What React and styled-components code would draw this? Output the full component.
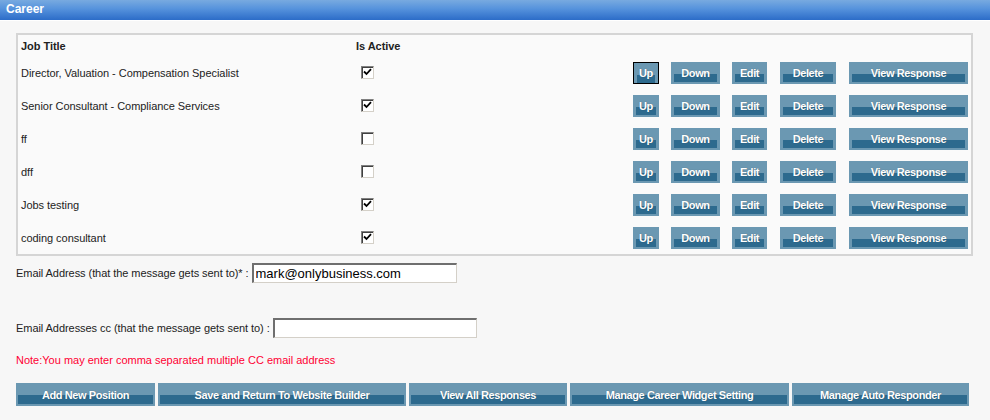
import React from "react";
import styled, { createGlobalStyle } from "styled-components";

const GlobalStyle = createGlobalStyle`
  html, body {
    margin: 0;
    padding: 0;
    background: #f7f7f7;
    font-family: "Liberation Sans", Arial, sans-serif;
  }
`

const Page = styled.div`
  width: 990px;
  height: 420px;
  background: #f7f7f7;
  overflow: hidden;
`

const TitleBar = styled.div`
  height: 20px;
  padding-left: 6px;
  background: linear-gradient(#78aae0, #5592dc 45%, #2c6cc8);
  color: #fff;
  font-weight: bold;
  font-size: 12px;
  line-height: 19px;
  border-bottom: 1px solid #fff;
`

const Body = styled.div`
  padding: 12px 17px 0 16px;
`

const ListBox = styled.div`
  border: 2px solid #d5d5d5;
  background: #fafafa;
`

const Row = styled.div`
  display: grid;
  grid-template-columns: 335px 1fr auto;
  align-items: center;
  height: ${p => p.$head ? "21px" : "33px"};
  padding: 0 3px;
  font-size: 11px;
  color: #222;
  font-weight: ${p => p.$head ? "bold" : "normal"};
  letter-spacing: -0.05px;
`

const TitleCell = styled.div`
  white-space: nowrap;
`

const CheckCell = styled.div`
  padding-left: 5px;
  display: flex;
`

const CheckBox = styled.span`
  width: 11px;
  height: 11px;
  background: #fff;
  border-top: 1px solid #808080;
  border-left: 1px solid #808080;
  border-right: 1px solid #d4d0c8;
  border-bottom: 1px solid #d4d0c8;
  box-shadow: inset 1px 1px 0 #404040;
  display: flex;
  align-items: center;
  justify-content: center;
  margin-top: -1px;
`

const Actions = styled.div`
  display: flex;
  gap: 12px;
`

const Btn = styled.button`
  box-sizing: border-box;
  width: ${p => p.$w}px;
  height: ${p => p.$h || 22}px;
  padding: 0;
  border: ${p => p.$focus ? "1px solid #000" : "none"};
  background-color: #6b98b2;
  background-image: linear-gradient(#2d6a8e, #2d6a8e);
  background-size: calc(100% - ${p => p.$inset * 2}px) ${p => p.$band}px;
  background-position: ${p => p.$inset}px ${p => p.$top}px;
  background-repeat: no-repeat;
  color: #fff;
  font-family: "Liberation Sans", Arial, sans-serif;
  font-weight: bold;
  font-size: 11px;
  letter-spacing: -0.4px;
  text-shadow: 0 0 1px rgba(0, 0, 0, 0.35);
  cursor: pointer;
  white-space: nowrap;
`

const FieldRow = styled.div`
  display: flex;
  align-items: center;
  margin-top: ${p => p.$mt}px;
  font-size: 11px;
  color: #222;
  letter-spacing: -0.06px;
`

const Input = styled.input`
  box-sizing: border-box;
  width: ${p => p.$w}px;
  height: 20px;
  margin-left: 3px;
  padding: 0 2px;
  border-top: 2px solid #6f6f6f;
  border-left: 2px solid #6f6f6f;
  border-right: 1px solid #d4d0c8;
  border-bottom: 1px solid #d4d0c8;
  background: #fff;
  font-family: "Liberation Sans", Arial, sans-serif;
  font-size: 13px;
  letter-spacing: 0;
  color: #000;
  outline: none;
`

const Note = styled.div`
  margin-top: 16px;
  font-size: 11px;
  color: #ff0033;
`

const Footer = styled.div`
  display: flex;
  gap: 3px;
  margin-top: 17px;
`

const Check = () => (
  <svg width="9" height="8" viewBox="0 0 9 8">
    <path d="M1 3.5 L3.5 6 L8 1.2" stroke="#000" strokeWidth="1.8" fill="none" />
  </svg>
)

const jobs = [
  { title: "Director, Valuation - Compensation Specialist", active: true },
  { title: "Senior Consultant - Compliance Services", active: true },
  { title: "ff", active: false },
  { title: "dff", active: false },
  { title: "Jobs testing", active: true },
  { title: "coding consultant", active: true },
]

const rowButtons = [
  { label: "Up", w: 26 },
  { label: "Down", w: 49 },
  { label: "Edit", w: 35 },
  { label: "Delete", w: 56 },
  { label: "View Response", w: 119 },
]

const footerButtons = [
  { label: "Add New Position", w: 139 },
  { label: "Save and Return To Website Builder", w: 248 },
  { label: "View All Responses", w: 158 },
  { label: "Manage Career Widget Setting", w: 219 },
  { label: "Manage Auto Responder", w: 177 },
]

export default function App() {
  return (
    <Page>
      <GlobalStyle />
      <TitleBar>Career</TitleBar>
      <Body>
        <ListBox>
          <Row $head>
            <TitleCell>Job Title</TitleCell>
            <div>Is Active</div>
            <div />
          </Row>
          {jobs.map((job, i) => (
            <Row key={i}>
              <TitleCell>{job.title}</TitleCell>
              <CheckCell>
                <CheckBox>{job.active && <Check />}</CheckBox>
              </CheckCell>
              <Actions>
                {rowButtons.map((b, j) => (
                  <Btn key={b.label} $w={b.w} $inset={3} $top={12} $band={8}
                    $focus={i === 0 && j === 0}
                    style={j >= 3 ? { marginLeft: 1 } : undefined}>
                    {b.label}
                  </Btn>
                ))}
              </Actions>
            </Row>
          ))}
        </ListBox>

        <FieldRow $mt={7}>
          Email Address (that the message gets sent to)* :
          <Input $w={205} defaultValue="mark@onlybusiness.com" />
        </FieldRow>
        <FieldRow $mt={35}>
          Email Addresses cc (that the message gets sent to) :
          <Input $w={204} defaultValue="" />
        </FieldRow>
        <Note>Note:You may enter comma separated multiple CC email address</Note>

        <Footer>
          {footerButtons.map(b => (
            <Btn key={b.label} $w={b.w} $h={23} $inset={2} $top={12} $band={9}>
              {b.label}
            </Btn>
          ))}
        </Footer>
      </Body>
    </Page>
  )
}
